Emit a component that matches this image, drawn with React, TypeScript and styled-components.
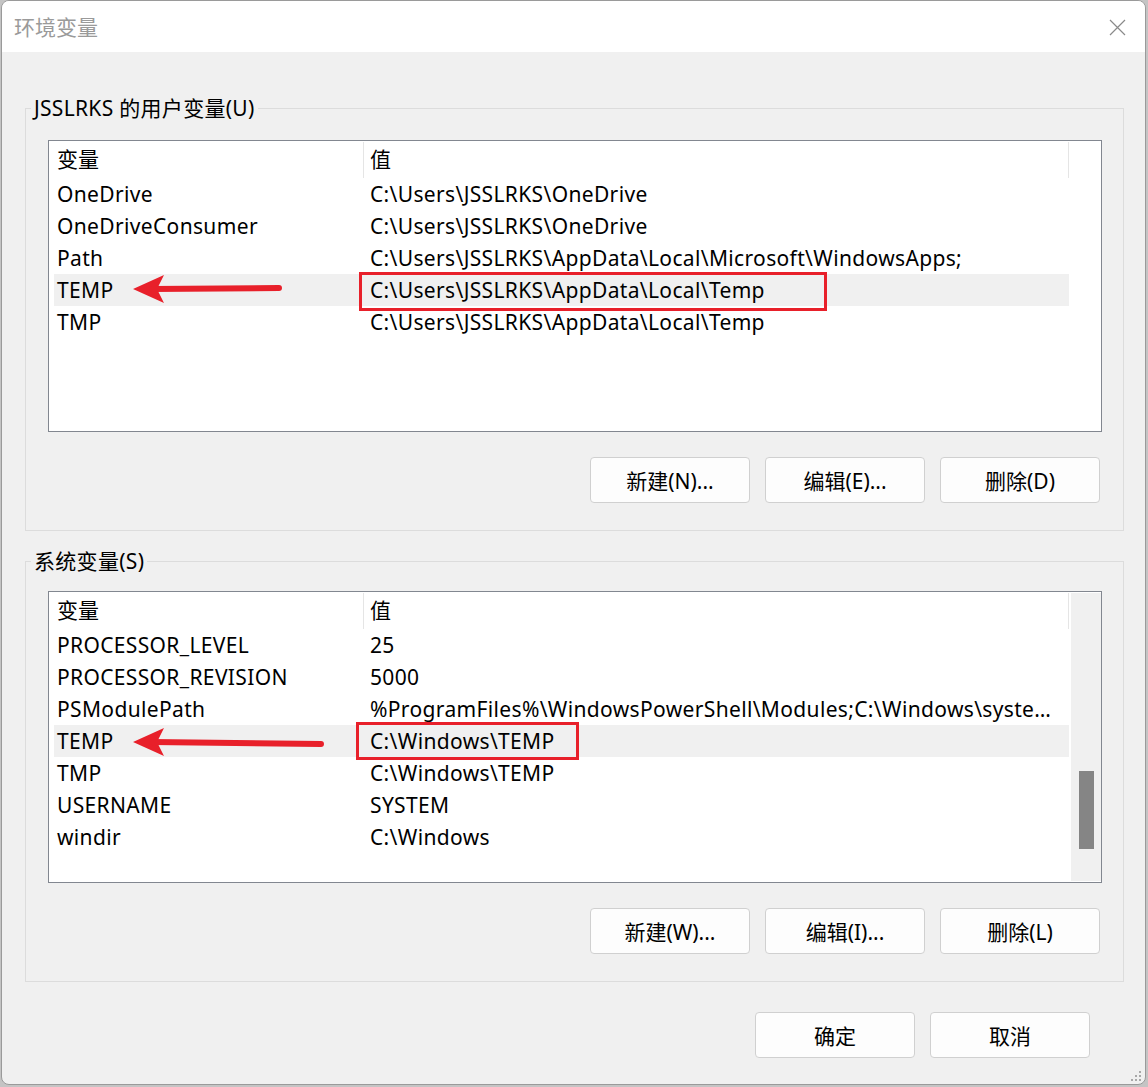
import React from 'react'
import styled, { createGlobalStyle } from 'styled-components'

const FONT = `"Noto Sans", "Noto Sans CJK SC", sans-serif`

const GlobalStyle = createGlobalStyle`
    html, body {
        margin: 0;
        padding: 0;
        background: #c4c4c4;
        font-family: ${FONT};
    }
`

const userVars: [string, string][] = [
    ['OneDrive', 'C:\\Users\\JSSLRKS\\OneDrive'],
    ['OneDriveConsumer', 'C:\\Users\\JSSLRKS\\OneDrive'],
    ['Path', 'C:\\Users\\JSSLRKS\\AppData\\Local\\Microsoft\\WindowsApps;'],
    ['TEMP', 'C:\\Users\\JSSLRKS\\AppData\\Local\\Temp'],
    ['TMP', 'C:\\Users\\JSSLRKS\\AppData\\Local\\Temp'],
]

const systemVars: [string, string][] = [
    ['PROCESSOR_LEVEL', '25'],
    ['PROCESSOR_REVISION', '5000'],
    ['PSModulePath', '%ProgramFiles%\\WindowsPowerShell\\Modules;C:\\Windows\\system32\\WindowsPowerShell\\v1.0\\Modules'],
    ['TEMP', 'C:\\Windows\\TEMP'],
    ['TMP', 'C:\\Windows\\TEMP'],
    ['USERNAME', 'SYSTEM'],
    ['windir', 'C:\\Windows'],
]

interface VarListProps {
    rows: [string, string][]
    selected: number
    scroll?: boolean
}

const VarList = ({ rows, selected, scroll }: VarListProps) => (
    <ListBox>
        <ListBody>
            <HeaderRow>
                <HeaderCell>变量</HeaderCell>
                <HeaderCell $second>值</HeaderCell>
            </HeaderRow>
            {rows.map(([name, value], i) => (
                <Row key={name} $selected={i === selected}>
                    <Cell>{name}</Cell>
                    <Cell>{value}</Cell>
                </Row>
            ))}
        </ListBody>
        {scroll && (
            <ScrollTrack>
                <ScrollThumb />
            </ScrollTrack>
        )}
    </ListBox>
)

const App = () => {
    return (
        <>
            <GlobalStyle />
            <Window>
                <TitleBar>
                    <Title>环境变量</Title>
                    <CloseButton>
                        <svg width="17" height="17" viewBox="0 0 17 17">
                            <path d="M1 1 L16 16 M16 1 L1 16" stroke="#8a8a8a" strokeWidth="1.2" fill="none" />
                        </svg>
                    </CloseButton>
                </TitleBar>

                <Body>
                    <Group>
                        <Legend>JSSLRKS 的用户变量(U)</Legend>
                        <VarList rows={userVars} selected={3} />
                        <ButtonRow>
                            <Button>新建(N)...</Button>
                            <Button>编辑(E)...</Button>
                            <Button>删除(D)</Button>
                        </ButtonRow>
                    </Group>

                    <Group $second>
                        <Legend>系统变量(S)</Legend>
                        <VarList rows={systemVars} selected={3} scroll />
                        <ButtonRow>
                            <Button>新建(W)...</Button>
                            <Button>编辑(I)...</Button>
                            <Button>删除(L)</Button>
                        </ButtonRow>
                    </Group>

                    <Footer>
                        <Button>确定</Button>
                        <Button>取消</Button>
                    </Footer>
                </Body>

                <Grip width="14" height="14" viewBox="0 0 14 14">
                    {[[10, 2], [6, 6], [10, 6], [2, 10], [6, 10], [10, 10]].map(([x, y]) => (
                        <rect key={`${x}-${y}`} x={x} y={y} width="2" height="2" fill="#a8a8a8" />
                    ))}
                </Grip>

                {/* red annotations drawn on top of the screenshot */}
                <Marks width="1148" height="1087" viewBox="0 0 1148 1087">
                    <g fill="#e8202a" stroke="none">
                        <path d="M133 289 L164 275 L157 289 L164 303 Z" />
                        <path d="M133 742 L164 728 L157 742 L164 756 Z" />
                    </g>
                    <g stroke="#e8202a" strokeLinecap="round" fill="none">
                        <line x1="152" y1="289" x2="279" y2="288" strokeWidth="6" />
                        <line x1="152" y1="742" x2="321" y2="744" strokeWidth="6" />
                    </g>
                    <g stroke="#e8202a" strokeWidth="3" fill="none">
                        <rect x="360.5" y="273.5" width="465" height="36" />
                        <rect x="357.5" y="723.5" width="220" height="35" />
                    </g>
                </Marks>
            </Window>
        </>
    )
}

const Window = styled.div`
    position: relative;
    box-sizing: border-box;
    width: 1145px;
    height: 1085px;
    margin-left: 1px;
    border: 1px solid #9a9a9a;
    border-radius: 8px;
    overflow: hidden;
    background: #f0f0f0;
    font-family: ${FONT};
`

const TitleBar = styled.div`
    height: 51px;
    background: #ffffff;
    display: flex;
    align-items: center;
    padding-left: 12px;
`

const Title = styled.span`
    font-size: 21px;
    color: #9a9a9a;
    margin-top: -1px;
`

const CloseButton = styled.div`
    margin-left: auto;
    margin-right: 19px;
    display: flex;
    margin-top: 1px;
`

const Body = styled.div`
    padding: 0 21px 0 23px;
    display: flex;
    flex-direction: column;
`

const Group = styled.fieldset<{ $second?: boolean }>`
    margin: ${p => (p.$second ? '16px' : '42px')} 0 0 0;
    padding: ${p => (p.$second ? '16px' : '18px')} 21px 27px 22px;
    border: 1px solid #dcdcdc;
    min-width: 0;
`

const Legend = styled.legend`
    margin-left: -17px;
    padding: 0 3px;
    font-size: 21px;
    line-height: 28px;
    letter-spacing: 0.3px;
    color: #000;
`

const ListBox = styled.div`
    box-sizing: border-box;
    height: 292px;
    border: 1px solid #828790;
    background: #ffffff;
    display: flex;
`

const ListBody = styled.div`
    flex: 1;
    min-width: 0;
`

const HeaderRow = styled.div`
    display: grid;
    grid-template-columns: 315px 705px;
    height: 37px;
`

const HeaderCell = styled.div<{ $second?: boolean }>`
    box-sizing: border-box;
    height: 36px;
    margin-top: 1px;
    border-right: 1px solid #e5e5e5;
    padding-left: ${p => (p.$second ? '6px' : '8px')};
    font-size: 21px;
    line-height: 35px;
    color: #000;
`

const Row = styled.div<{ $selected?: boolean }>`
    display: grid;
    grid-template-columns: 313px 1fr;
    width: 1015px;
    height: 32px;
    margin-left: 5px;
    background: ${p => (p.$selected ? '#f0f0f0' : 'transparent')};
`

const Cell = styled.div`
    padding: 0 12px 0 3px;
    font-size: 21px;
    line-height: 32px;
    letter-spacing: 0.35px;
    color: #000;
    white-space: nowrap;
    overflow: hidden;
    text-overflow: ellipsis;
`

const ScrollTrack = styled.div`
    width: 30px;
    margin: 1px 0 1px 2px;
    background: #f0f0f0;
    display: flex;
    flex-direction: column;
    align-items: center;
`

const ScrollThumb = styled.div`
    width: 15px;
    height: 78px;
    margin-top: 178px;
    background: #858585;
`

const ButtonRow = styled.div`
    display: flex;
    justify-content: flex-end;
    gap: 15px;
    margin-top: 25px;
    padding-right: 2px;
`

const Button = styled.button`
    box-sizing: border-box;
    width: 160px;
    height: 46px;
    border: 1px solid #d0d0d0;
    border-radius: 4px;
    background: #fdfdfd;
    font-family: ${FONT};
    font-size: 21px;
    color: #000;
    padding: 0;
`

const Footer = styled.div`
    display: flex;
    justify-content: flex-end;
    gap: 15px;
    margin-top: 30px;
    padding-right: 34px;
`

const Grip = styled.svg`
    position: absolute;
    right: 2px;
    bottom: 1px;
`

const Marks = styled.svg`
    position: absolute;
    left: -2px;
    top: -1px;
    pointer-events: none;
`

export default App
